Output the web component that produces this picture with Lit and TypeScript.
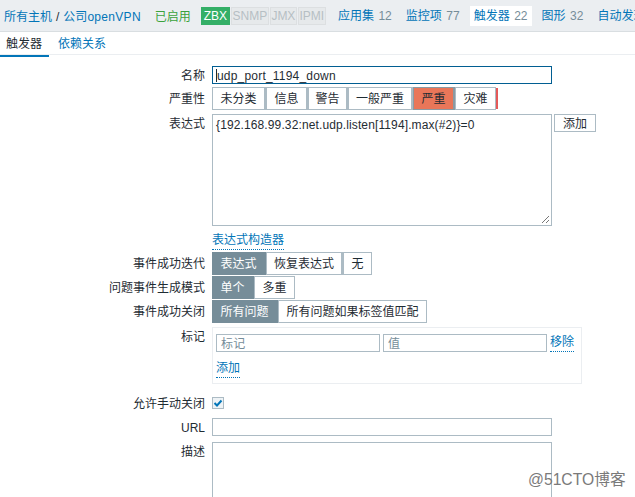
import { LitElement, html, css } from "lit";
import { customElement } from "lit/decorators.js";

const seg = (items: string[], active = -1, cls = "") =>
  html`<div class="seg ${cls}">${items.map((t, i) => html`<span class="sb ${i === active ? "on" : ""}">${t}</span>`)}</div>`;

@customElement("app-root")
export class AppRoot extends LitElement {
  static styles = css`
    :host { display: block; position: relative; width: 635px; height: 497px; overflow: hidden; background: #fff;
      font: 12px "Liberation Sans", "Noto Sans CJK SC", sans-serif; color: #1f2c33; }
    a { color: #0275b8; text-decoration: none; }
    .top { display: flex; align-items: center; height: 31px; background: #ebeef1; border-bottom: 1px solid #d9dee1; padding-left: 4px; white-space: nowrap; overflow: hidden; }
    .crumb { margin-right: 14px; }
    .crumb i { font-style: normal; color: #1f2c33; margin: 0 4px; }
    .ltn { letter-spacing: .3px; }
    .en { color: #3aa33c; margin-right: 10px; }
    .st { box-sizing: border-box; height: 18px; line-height: 16px; text-align: center; margin-right: 1px; background: #e6e9eb; color: #b6bfc4; border: 1px solid #dcdfe1; font-size: 12px; flex: none; }
    .st.z { background: #34af67; color: #fff; border-color: #34af67; width: 29px; }
    .st.s { width: 38px; }
    .st.j { width: 27px; }
    .st.i { width: 28px; overflow: hidden; }
    .nav { display: flex; margin-left: 7px; }
    .nav span.n { display: block; padding: 0 4px; height: 20px; line-height: 20px; margin-right: 6px; }
    .nav .n b { font-weight: normal; color: #768d99; margin-left: 4.5px; }
    .nav .n.cur { background: #fff; }
    .tabs { display: flex; box-sizing: border-box; height: 23px; border-bottom: 1px solid #ebeef1; }
    .tab { width: 49px; box-sizing: border-box; padding: 2px 0 0 6px; height: 25px; flex: none; }
    .tab.cur { border-bottom: 2px solid #0275b8; color: #1f2c33; }
    .tab.l { width: auto; padding-left: 9px; }
    .form { display: grid; grid-template-columns: 205px 1fr; column-gap: 7px; padding-top: 11px; }
    .lb { text-align: right; line-height: 18px; padding-top: 1px; }
    .row { margin-bottom: 3px; display: flex; align-items: flex-start; }
    .lb.m { line-height: 23px; }
    .g1 { margin-bottom: 1px; }
    .g2 { margin-bottom: 2px; }
    .g4 { margin-bottom: 4px; }
    .g6 { margin-bottom: 6px; }
    .g9 { margin-bottom: 9px; }
    .g13 { margin-bottom: 13px; }
    .inp { box-sizing: border-box; width: 340px; height: 18px; border: 1px solid #acbbc4; line-height: 18px; padding-left: 3px; letter-spacing: .2px; }
    .inp.focus { border-color: #015e92; }
    .caret { display: inline-block; width: 1px; height: 13px; background: #1f2c33; vertical-align: -2px; }
    .ta { box-sizing: border-box; width: 340px; height: 112px; border: 1px solid #acbbc4; padding: 2px 3px; line-height: 16px; position: relative; letter-spacing: .12px; }
    .ta.desc { height: 80px; }
    .grip { position: absolute; right: 1px; bottom: 1px; }
    .btn { margin-left: 2px; width: 42px; height: 18px; box-sizing: border-box; border: 1px solid #acbbc4; text-align: center; line-height: 18px; }
    .seg { display: flex; height: 23px; }
    .sb { box-sizing: border-box; border: 1px solid #acbbc4; border-right-width: 2px; background: #fff; line-height: 23px; text-align: center; white-space: nowrap; }
    .sb:last-child { border-right-width: 1px; }
    .sb.on { background: #768d99; border-color: #768d99; color: #fff; }
    .w1 .sb:nth-child(1) { width: 54px; }
    .w1 .sb:nth-child(2) { width: 77px; }
    .w1 .sb:nth-child(3) { width: 29px; }
    .w2 .sb:nth-child(1) { width: 42px; }
    .w2 .sb:nth-child(2) { width: 41px; }
    .w3 .sb:nth-child(1) { width: 66px; }
    .w3 .sb:nth-child(2) { width: 149px; }
    .sev .sb:nth-child(1) { width: 54px; }
    .sev .sb:nth-child(2) { width: 42px; }
    .sev .sb:nth-child(3) { width: 40px; }
    .sev .sb:nth-child(4) { width: 65px; }
    .sev .sb:nth-child(5) { width: 42px; background: #e97659; border-color: #8a9aa3; }
    .sev .sb:nth-child(6) { width: 41px; }
    .strip { width: 2px; height: 21px; background: #e45959; margin-top: 1px; }
    .link { border-bottom: 1px dotted #0275b8; display: inline-block; line-height: 17px; }
    .tags { box-sizing: border-box; width: 370px; height: 57px; border: 1px solid #ebeef1; padding: 6px 3px; }
    .tr { display: flex; gap: 3px; align-items: flex-start; }
    .tags .inp { color: #768d99; width: 164px; padding-left: 4px; flex: none; }
    .tags .add { margin-top: 8px; }
    .chk { box-sizing: border-box; width: 12px; height: 12px; border: 1px solid #acbbc4; background: #eef3f6; display: flex; }
    .lb.ck { line-height: 12px; }
    .wm { position: absolute; left: 528px; top: 470px; font-size: 15.7px; color: #7a7a7a; line-height: 20px; white-space: nowrap; }
  `;

  render() {
    return html`
      <div class="top">
        <span class="crumb"><a>所有主机</a><i>/</i><a>公司<span class="ltn">openVPN</span></a></span>
        <span class="en">已启用</span>
        <span class="st z">ZBX</span><span class="st s">SNMP</span><span class="st j">JMX</span><span class="st i">IPMI</span>
        <div class="nav">
          <span class="n"><a>应用集</a><b>12</b></span>
          <span class="n"><a>监控项</a><b>77</b></span>
          <span class="n cur"><a>触发器</a><b>22</b></span>
          <span class="n"><a>图形</a><b>32</b></span>
          <span class="n"><a>自动发现规则</a></span>
        </div>
      </div>
      <div class="tabs">
        <div class="tab cur">触发器</div>
        <div class="tab l"><a>依赖关系</a></div>
      </div>
      <div class="form">
        <div class="lb">名称</div>
        <div class="row"><div class="inp focus"><span class="caret"></span>udp_port_1194_down</div></div>

        <div class="lb m">严重性</div>
        <div class="row g4">${seg(["未分类", "信息", "警告", "一般严重", "严重", "灾难"], -1, "sev")}<span class="strip"></span></div>

        <div class="lb">表达式</div>
        <div class="row g6">
          <div class="ta">{192.168.99.32:net.udp.listen[1194].max(#2)}=0
            <svg class="grip" width="9" height="9" viewBox="0 0 9 9"><path d="M8 1 1 8M8 5 5 8" stroke="#777" fill="none"/></svg>
          </div>
          <div class="btn">添加</div>
        </div>

        <div></div>
        <div class="row g2"><a class="link">表达式构造器</a></div>

        <div class="lb m">事件成功迭代</div>
        <div class="row g1">${seg(["表达式", "恢复表达式", "无"], 0, "w1")}</div>
        <div class="lb m">问题事件生成模式</div>
        <div class="row g1">${seg(["单个", "多重"], 0, "w2")}</div>
        <div class="lb m">事件成功关闭</div>
        <div class="row g4">${seg(["所有问题", "所有问题如果标签值匹配"], 0, "w3")}</div>

        <div class="lb">标记</div>
        <div class="row g13">
          <div class="tags">
            <div class="tr">
              <div class="inp">标记</div>
              <div class="inp">值</div>
              <a class="link">移除</a>
            </div>
            <a class="link add">添加</a>
          </div>
        </div>

        <div class="lb ck">允许手动关闭</div>
        <div class="row g9">
          <div class="chk"><svg width="10" height="10" viewBox="0 0 10 10"><path d="M1.5 5 4 7.5 8.5 2.5" stroke="#0275b8" stroke-width="2" fill="none"/></svg></div>
        </div>

        <div class="lb">URL</div>
        <div class="row g6"><div class="inp"></div></div>
        <div class="lb">描述</div>
        <div class="row"><div class="ta desc"></div></div>
      </div>
      <div class="wm">@51CTO博客</div>
    `;
  }
}
